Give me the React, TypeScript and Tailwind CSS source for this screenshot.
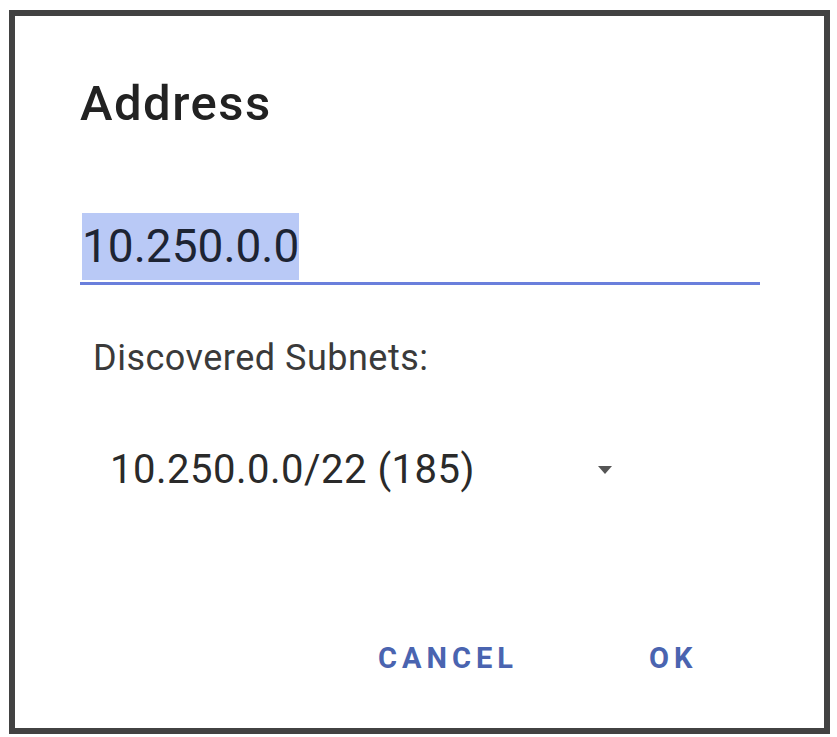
export default function App() {
  return (
    <div className="h-[737px] w-[837px] bg-white pl-[9px] pt-[10px] font-['Roboto','Liberation_Sans',sans-serif]">
      <div className="flex h-[724px] w-[821px] flex-col border-[6px] border-[#424242] bg-white">
        {/* Title */}
        <h1 className="ml-[65px] mt-[63px] h-[49px] text-[49px] font-medium leading-[49px] tracking-[1.5px] text-[#222]">
          Address
        </h1>

        {/* Address input */}
        <div className="ml-[65px] mt-[85px] w-[680px]">
          <span className="ml-[2px] inline-block h-[67px] bg-[#b9c9f6] text-[46px] leading-[67px] text-[#1d2433]">
            10.250.0.0
          </span>
          <div className="mt-[2px] h-[3px] bg-[#6a7fdc]" />
        </div>

        {/* Subnets */}
        <p className="ml-[78px] mt-[55px] h-[36px] text-[36px] leading-[36px] tracking-[0.5px] text-[#3a3a3a]">
          Discovered Subnets:
        </p>

        <div className="ml-[95px] mt-[74px] flex h-[40px] w-[520px] items-center">
          <span className="flex-1 text-[40px] leading-[40px] tracking-[0.5px] text-[#2a2a2a]">
            10.250.0.0/22 (185)
          </span>
          <svg width="14" height="8" viewBox="0 0 14 8" className="mr-[18px]">
            <path d="M0 0 L14 0 L7 8 Z" fill="#555" />
          </svg>
        </div>

        {/* Buttons */}
        <div className="ml-[363px] mt-[155px] flex h-[27px] items-center">
          <button className="text-[29px] font-bold leading-[27px] tracking-[5px] text-[#4a64b0]">
            CANCEL
          </button>
          <button className="ml-[131px] text-[29px] font-bold leading-[27px] tracking-[5px] text-[#4a64b0]">
            OK
          </button>
        </div>
      </div>
    </div>
  );
}
